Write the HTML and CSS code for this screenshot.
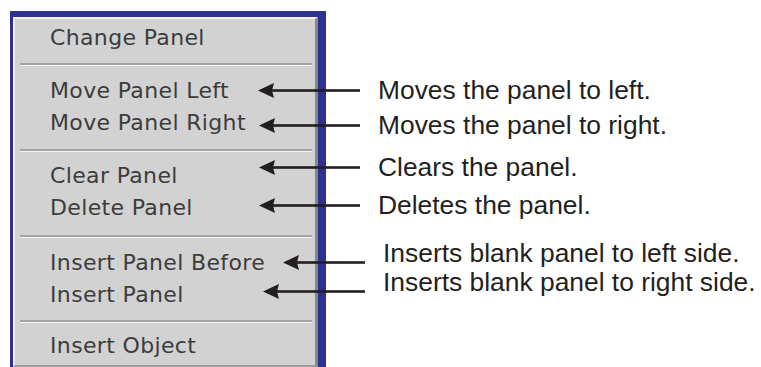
FILE: index.html
```html
<!DOCTYPE html>
<html lang="en">
<head>
<meta charset="utf-8">
<title>Panel context menu</title>
<link rel="stylesheet" href="styles.css">
</head>
<body>
<div class="figure">
  <div class="frame">
    <ul class="menu">
      <li class="item">Change Panel</li>
      <li class="sep"></li>
      <li class="item">Move Panel Left</li>
      <li class="item">Move Panel Right</li>
      <li class="sep sep-b"></li>
      <li class="item">Clear Panel</li>
      <li class="item">Delete Panel</li>
      <li class="sep sep-c"></li>
      <li class="item">Insert Panel Before</li>
      <li class="item">Insert Panel</li>
      <li class="sep sep-d"></li>
      <li class="item">Insert Object</li>
    </ul>
  </div>

  <div class="callout c1">
    <svg class="arrow" width="102" height="15" viewBox="0 0 102 15"><polygon points="0,7.5 16,0 14,7.5 16,15"/><rect x="14" y="6.2" width="88" height="2.6"/></svg>
    <span class="label">Moves the panel to left.</span>
  </div>
  <div class="callout c2">
    <svg class="arrow" width="101" height="15" viewBox="0 0 101 15"><polygon points="0,7.5 16,0 14,7.5 16,15"/><rect x="14" y="6.2" width="87" height="2.6"/></svg>
    <span class="label">Moves the panel to right.</span>
  </div>
  <div class="callout c3">
    <svg class="arrow" width="101" height="15" viewBox="0 0 101 15"><polygon points="0,7.5 16,0 14,7.5 16,15"/><rect x="14" y="6.2" width="87" height="2.6"/></svg>
    <span class="label">Clears the panel.</span>
  </div>
  <div class="callout c4">
    <svg class="arrow" width="101" height="15" viewBox="0 0 101 15"><polygon points="0,7.5 16,0 14,7.5 16,15"/><rect x="14" y="6.2" width="87" height="2.6"/></svg>
    <span class="label">Deletes the panel.</span>
  </div>
  <div class="callout c5">
    <svg class="arrow" width="82" height="15" viewBox="0 0 82 15"><polygon points="0,7.5 16,0 14,7.5 16,15"/><rect x="14" y="6.2" width="68" height="2.6"/></svg>
    <span class="label raised">Inserts blank panel to left side.</span>
  </div>
  <div class="callout c6">
    <svg class="arrow" width="102" height="15" viewBox="0 0 102 15"><polygon points="0,7.5 16,0 14,7.5 16,15"/><rect x="14" y="6.2" width="88" height="2.6"/></svg>
    <span class="label raised">Inserts blank panel to right side.</span>
  </div>
</div>
</body>
</html>
```

FILE: styles.css
```css
html, body {
  margin: 0;
  padding: 0;
  background: #ffffff;
}

body {
  width: 761px;
  height: 367px;
  overflow: hidden;
}

.figure {
  position: relative;
  width: 761px;
  height: 367px;
  padding: 11px 0 0 10px;
  box-sizing: border-box;
}

.frame {
  width: 316px;
  height: 360px;
  box-sizing: border-box;
  background: #2f3192;
  border-top: 6px solid #2f3192;
  border-left: 3px solid #2f3192;
  border-right: 8px solid #2f3192;
}

.menu {
  list-style: none;
  margin: 0;
  padding: 3px 0 0 0;
  width: 305px;
  height: 350px;
  box-sizing: border-box;
  background: #d2d2d2;
  border-top: 2px solid #f2f2f2;
  border-left: 2px solid #f2f2f2;
  border-right: 3px solid #85898c;
  border-bottom: 2px solid #9c9c9c;
  font-family: "DejaVu Sans", sans-serif;
  font-size: 22px;
  letter-spacing: 0.35px;
  color: #3c3c3c;
}

.item {
  height: 32px;
  line-height: 32px;
  padding-left: 35px;
  white-space: nowrap;
}

.sep {
  height: 0;
  margin: 9px 3px 9px 5px;
  border-top: 2px solid #a2a6aa;
  border-bottom: 1px solid #f2f2f2;
}

.sep-b { margin-top: 10px; margin-bottom: 8px; }
.sep-c { margin-top: 11px; margin-bottom: 9px; }
.sep-d { margin-top: 9px; margin-bottom: 7px; }

.callout {
  position: absolute;
  display: flex;
  align-items: center;
  height: 26px;
  gap: 18px;
}

.c1 { left: 258px; top: 77px; }
.c2 { left: 259px; top: 112px; }
.c3 { left: 259px; top: 154px; }
.c4 { left: 259px; top: 192px; }
.c5 { left: 283px; top: 249px; }
.c6 { left: 263px; top: 278px; }

.arrow {
  display: block;
  flex: none;
  fill: #231f20;
}

.label {
  font-family: "Liberation Sans", Arial, sans-serif;
  font-size: 26.4px;
  line-height: 26px;
  color: #231f20;
  white-space: nowrap;
}

.label.raised {
  margin-bottom: 18px;
}
```
